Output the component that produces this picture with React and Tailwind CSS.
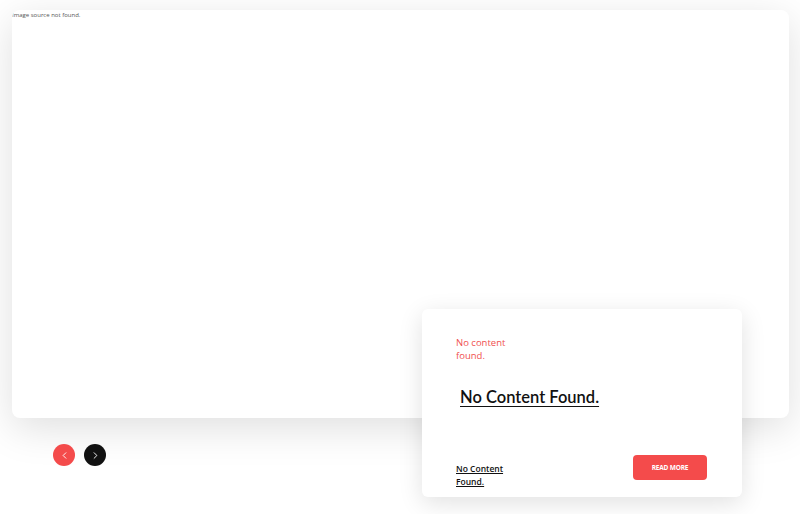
import React from "react";

const Chevron = ({ dir }) => (
  <svg width="11" height="11" viewBox="0 0 24 24" fill="none" stroke="currentColor" strokeWidth="2" strokeLinecap="round" strokeLinejoin="round">
    {dir === "left" ? <path d="M15 18l-6-6 6-6" /> : <path d="M9 18l6-6-6-6" />}
  </svg>
);

const App = () => {
  return (
    <div className="w-[800px] h-[514px] bg-white overflow-hidden font-['Open_Sans',sans-serif]">
      <div className="relative pt-[10px] px-[12px]">
        <div className="w-[777px] h-[408px] bg-white rounded-[8px] shadow-[0_10px_40px_rgba(0,0,0,0.13)] overflow-hidden">
          <p className="text-[6px] leading-[9px] text-[#555] mt-[1px]">Image source not found.</p>
        </div>

        <div className="flex gap-[9px] pl-[41px] pt-[26px]">
          <button className="w-[22px] h-[22px] rounded-full bg-[#f44b4b] text-white flex items-center justify-center">
            <Chevron dir="left" />
          </button>
          <button className="w-[22px] h-[22px] rounded-full bg-[#111] text-white flex items-center justify-center">
            <Chevron dir="right" />
          </button>
        </div>

        <div className="absolute left-[422px] top-[309px] w-[320px] h-[188px] bg-white rounded-[6px] shadow-[0_6px_24px_rgba(0,0,0,0.12)] px-[34px] pt-[27px] flex flex-col">
          <p className="w-[60px] text-[9.5px] leading-[13px] text-[#f0504f]">No content found.</p>
          <h2 className="mt-[25px] ml-[4px] text-[16.5px] leading-[20px] font-semibold text-[#111] underline underline-offset-[3px] font-['Lato',sans-serif]">
            No Content Found.
          </h2>
          <div className="mt-auto mb-[9px] flex items-start justify-between pr-[1px]">
            <p className="w-[52px] text-[8.5px] leading-[13px] font-semibold text-[#111] underline pt-[7px]">No Content Found.</p>
            <button className="w-[74px] h-[25px] rounded-[4px] bg-[#f44b4b] text-white text-[6.5px] font-bold tracking-tight">
              READ MORE
            </button>
          </div>
        </div>
      </div>
    </div>
  );
};

export default App;
